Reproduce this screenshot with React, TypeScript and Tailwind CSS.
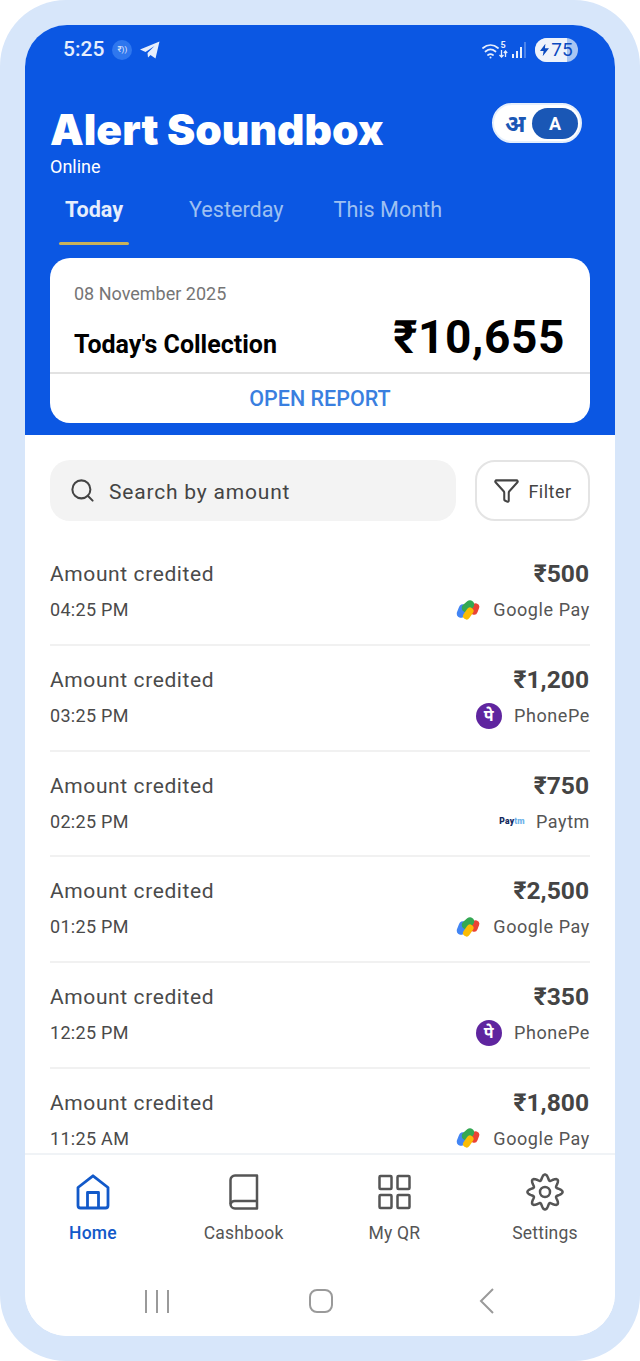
import { Funnel, Search } from "lucide-react";

const rows = [
  { time: "04:25 PM", amount: "₹500", app: "gpay" },
  { time: "03:25 PM", amount: "₹1,200", app: "phonepe" },
  { time: "02:25 PM", amount: "₹750", app: "paytm" },
  { time: "01:25 PM", amount: "₹2,500", app: "gpay" },
  { time: "12:25 PM", amount: "₹350", app: "phonepe" },
  { time: "11:25 AM", amount: "₹1,800", app: "gpay" },
];

function GooglePayLogo() {
  return (
    <svg width="24" height="21" viewBox="0 0 24 21" fill="none" strokeLinecap="round">
      <path d="M5 13.500 L7 8.500" stroke="#4285f4" strokeWidth="8.500" />
      <path d="M18 11 L19.500 7" stroke="#ea4335" strokeWidth="7.500" />
      <path d="M10 8 L14 4.500" stroke="#34a853" strokeWidth="8.500" />
      <path d="M10.500 16 L14 11" stroke="#fbbc04" strokeWidth="7" />
    </svg>
  );
}

function AppLabel({ app }: { app: string }) {
  if (app === "gpay") {
    return (
      <div className="flex items-center gap-[13px]">
        <GooglePayLogo />
        <span>Google Pay</span>
      </div>
    );
  }
  if (app === "phonepe") {
    return (
      <div className="flex items-center gap-[12px]">
        <span className="w-[26px] h-[26px] rounded-full bg-[#5f259f] text-white text-[16px] font-bold flex items-center justify-center">पे</span>
        <span>PhonePe</span>
      </div>
    );
  }
  return (
    <div className="flex items-center gap-[11px]">
      <span className="text-[8.500px] font-black leading-none tracking-[0.2px]">
        <span className="text-[#12295c]">Pay</span>
        <span className="text-[#6fb3ea]">tm</span>
      </span>
      <span>Paytm</span>
    </div>
  );
}

function HomeIcon() {
  return (
    <svg width="34" height="36" viewBox="0 0 34 36" fill="none" stroke="#1259c9" strokeWidth="2.800" strokeLinejoin="round">
      <path d="M2 13.500 L17 1.800 L32 13.500 V31.500 a2.500 2.500 0 0 1 -2.500 2.500 H4.500 A2.500 2.500 0 0 1 2 31.500 Z" />
      <path d="M11.500 34 V18.500 H22.500 V34" />
    </svg>
  );
}

function BookIcon() {
  return (
    <svg width="30" height="36" viewBox="0 0 30 36" fill="none" stroke="#555555" strokeWidth="2.500" strokeLinejoin="round">
      <path d="M28 1.500 H6 A4.500 4.500 0 0 0 1.500 6 V30 A4.500 4.500 0 0 0 6 34.500 H28 Z" />
      <path d="M1.500 30 A4.500 4.500 0 0 1 6 27 H28" />
    </svg>
  );
}

function GridIcon() {
  return (
    <svg width="33" height="36" viewBox="0 0 33 36" fill="none" stroke="#555555" strokeWidth="2.500" strokeLinejoin="round">
      <rect x="1.500" y="2" width="12" height="13" rx="1" />
      <rect x="19.500" y="2" width="12" height="13" rx="1" />
      <rect x="1.500" y="21" width="12" height="13" rx="1" />
      <rect x="19.500" y="21" width="12" height="13" rx="1" />
    </svg>
  );
}

// wavy eight-tooth outline, one tooth at twelve o'clock
const gearPath =
  Array.from({ length: 97 }, (_, i) => {
    const a = (i / 96) * Math.PI * 2;
    const r = 14.8 + 2.8 * Math.cos(8 * a);
    return `${i === 0 ? "M" : "L"}${(20 + r * Math.sin(a)).toFixed(2)} ${(20 - r * Math.cos(a)).toFixed(2)}`;
  }).join(" ") + " Z";

function GearIcon() {
  return (
    <svg width="40" height="40" viewBox="0 0 40 40" fill="none" stroke="#555555" strokeWidth="2.500" strokeLinejoin="round">
      <path d={gearPath} />
      <circle cx="20" cy="20" r="5" />
    </svg>
  );
}

function NavItem({ label, active, icon }: { label: string; active?: boolean; icon: React.ReactNode }) {
  return (
    <div className={`flex flex-col items-center w-[100px] ${active ? "text-[#1259c9]" : "text-[#555555]"}`}>
      <div className="h-[38px] flex items-center justify-center">{icon}</div>
      <div className={`mt-[12px] text-[17.500px] leading-[20px] tracking-[0.2px] ${active ? "font-medium" : ""}`}>{label}</div>
    </div>
  );
}

export default function App() {
  return (
    <div className="w-[640px] h-[1361px] bg-white" style={{ fontFamily: "Roboto, 'Noto Sans', sans-serif" }}>
      <div className="h-full rounded-[66px] bg-[#d7e6fa] p-[25px]">
        <div className="h-full rounded-[42px] overflow-hidden bg-white flex flex-col">
          {/* blue header */}
          <div className="h-[410px] shrink-0 bg-[#0b57e3] px-[25px]">
            <div className="flex items-center justify-between h-[50px] pl-[13px] pr-[12px]">
              <div className="flex items-center gap-[8px] text-[#e6eefc]">
                <span className="text-[21px] font-medium">5:25</span>
                <span className="w-[20px] h-[20px] rounded-full bg-[#2f77ee] flex items-center justify-center text-[8px]">₹))</span>
                <svg width="20" height="18" viewBox="0 0 20 18" fill="#e6eefc">
                  <path d="M0 8.500 L19.500 0.500 L15.500 17.500 L10.500 14 L8 16.500 L7.500 12 L14.500 5 L5.500 11 Z" />
                </svg>
              </div>
              <div className="flex items-center gap-[5px]">
                <div className="flex items-start">
                  <svg width="17" height="16" viewBox="0 0 17 16" fill="none" stroke="#e6eefc" strokeWidth="1.700" strokeLinecap="round" className="mt-[2px]">
                    <path d="M1 5c4.500-4 10.500-4 15 0M3.500 8.500c3-2.500 7-2.500 10 0M6 12c1.500-1 3.500-1 5 0" />
                    <circle cx="8.500" cy="14.500" r="1" fill="#e6eefc" stroke="none" />
                  </svg>
                  <div className="w-[8px] flex flex-col items-center text-[#e6eefc]">
                    <span className="text-[9px] leading-[9px] font-bold">5</span>
                    <svg width="9" height="8" viewBox="0 0 9 8" fill="none" stroke="#e6eefc" strokeWidth="1.300">
                      <path d="M2.500 0v7M0.500 5l2 2 2-2M6.500 7V1M4.800 3l1.700-2 1.700 2" />
                    </svg>
                  </div>
                </div>
                <svg width="15" height="16" viewBox="0 0 15 16" fill="#e6eefc">
                  <rect x="0" y="12" width="2" height="4" />
                  <rect x="4" y="9" width="2" height="7" />
                  <rect x="8" y="5" width="2" height="11" />
                  <rect x="12.500" y="0" width="1" height="16" opacity="0.6" />
                </svg>
                <div className="w-[43px] h-[24px] rounded-full bg-[#a7c5f3] overflow-hidden relative ml-[3px]">
                  <div className="absolute inset-y-0 left-0 w-[32px] bg-[#eef3fb]" />
                  <div className="relative flex items-center justify-center h-full gap-[2px] text-[#0b4bc0] text-[19px]">
                    <svg width="9" height="14" viewBox="0 0 10 14" fill="#0b4bc0">
                      <path d="M6 0 L0 8 H4 L3 14 L10 5 H5.500 Z" />
                    </svg>
                    75
                  </div>
                </div>
              </div>
            </div>

            <div className="flex items-start justify-between mt-[30px] pr-[8px]">
              <div>
                <h1 className="text-[42.500px] leading-[50px] font-black text-white" style={{ fontFamily: "Inter, sans-serif" }}>
                  Alert Soundbox
                </h1>
                <div className="text-white text-[18px] leading-[20px] mt-[2px]">Online</div>
              </div>
              <div className="w-[90px] h-[40px] rounded-full bg-white border-[2px] border-[#e5effc] flex items-center justify-between pr-[2px] -mt-[2px] pl-[11px]">
                <span className="text-[24px] font-bold text-[#1a57b5]" style={{ fontFamily: "'Noto Sans', 'DejaVu Sans', sans-serif" }}>अ</span>
                <span className="w-[46px] h-[31px] rounded-full bg-[#1a57b5] text-white text-[18px] font-bold flex items-center justify-center">A</span>
              </div>
            </div>

            <div className="flex mt-[19px] text-[21.600px] leading-[28px]">
              <div className="w-[70px] ml-[9px] mr-[60px] flex flex-col items-center font-bold text-[#e6eefc]">
                <span>Today</span>
                <div className="w-[70px] h-[3px] rounded-full bg-[#c8b25a] mt-[18px]" />
              </div>
              <span className="text-[#9dc0f2]">Yesterday</span>
              <span className="text-[#9dc0f2] ml-[50px]">This Month</span>
            </div>

            <div className="mt-[13px] h-[165px] rounded-[20px] bg-white flex flex-col">
              <div className="flex-1 px-[25px] pt-[25px]">
                <div className="text-[18px] leading-[22px] text-[#757575] -ml-[1px]">08 November 2025</div>
                <div className="flex items-end justify-between mt-[6px]">
                  <span className="text-[25px] leading-[32px] font-bold text-black mb-[2px] -ml-[1px]">Today's Collection</span>
                  <span className="text-[46px] leading-[52px] font-bold text-black tracking-[0.6px]">₹10,655</span>
                </div>
              </div>
              <div className="h-[51px] pt-[2px] border-t-[2px] border-[#e2e2e2] flex items-center justify-center text-[21.500px] font-medium text-[#3a7fdf]">
                OPEN REPORT
              </div>
            </div>
          </div>

          {/* search row */}
          <div className="flex items-center gap-[19px] px-[25px] pt-[25px] shrink-0">
            <div className="w-[406px] h-[61px] rounded-[20px] bg-[#f3f3f3] flex items-center pl-[19px] gap-[13px] text-[#444444]">
              <Search size={27} strokeWidth={1.800} />
              <span className="text-[21px] tracking-[0.800px] pt-[4px]">Search by amount</span>
            </div>
            <div className="w-[115px] h-[61px] rounded-[20px] border-[2px] border-[#e4e4e4] flex items-center justify-center gap-[8px] text-[#444444]">
              <Funnel size={27} strokeWidth={1.800} />
              <span className="text-[18px] tracking-[0.500px] pt-[1px]">Filter</span>
            </div>
          </div>

          {/* transactions */}
          <div className="flex-1 overflow-hidden px-[25px] pt-[19px]">
            {rows.map((r) => (
              <div key={r.time} className="h-[105.750px] border-b-[2px] border-[#f1f1f1] flex justify-between pt-[20px]">
                <div>
                  <div className="text-[21px] leading-[28px] text-[#4a4a4a] tracking-[0.600px]">Amount credited</div>
                  <div className="text-[18px] leading-[24px] text-[#4a4a4a] mt-[10px] tracking-[0.300px]">{r.time}</div>
                </div>
                <div className="flex flex-col items-end">
                  <div className="text-[24.600px] leading-[28px] font-bold text-[#444444] pr-[1px]">{r.amount}</div>
                  <div className="text-[18px] leading-[26px] text-[#555555] mt-[9px] tracking-[0.600px]">
                    <AppLabel app={r.app} />
                  </div>
                </div>
              </div>
            ))}
          </div>

          {/* bottom nav */}
          <div className="h-[183px] shrink-0 border-t-[2px] border-[#f0f3f6] bg-white flex flex-col">
            <div className="flex justify-between pl-[18px] pr-[20px] pt-[18px]">
              <NavItem label="Home" active icon={<HomeIcon />} />
              <NavItem label="Cashbook" icon={<BookIcon />} />
              <NavItem label="My QR" icon={<GridIcon />} />
              <NavItem label="Settings" icon={<GearIcon />} />
            </div>
            <div className="flex items-center pl-[120px] mt-[45px]">
              <div className="flex gap-[9px]">
                <div className="w-[2px] h-[23px] bg-[#9a9a9a]" />
                <div className="w-[2px] h-[23px] bg-[#9a9a9a]" />
                <div className="w-[2px] h-[23px] bg-[#9a9a9a]" />
              </div>
              <div className="ml-[140px] w-[24px] h-[24px] rounded-[8px] border-[2px] border-[#9a9a9a]" />
              <svg className="ml-[146px]" width="16" height="26" viewBox="0 0 16 26" fill="none" stroke="#9a9a9a" strokeWidth="2">
                <path d="M14 1 L2 13 L14 25" />
              </svg>
            </div>
          </div>
        </div>
      </div>
    </div>
  );
}
